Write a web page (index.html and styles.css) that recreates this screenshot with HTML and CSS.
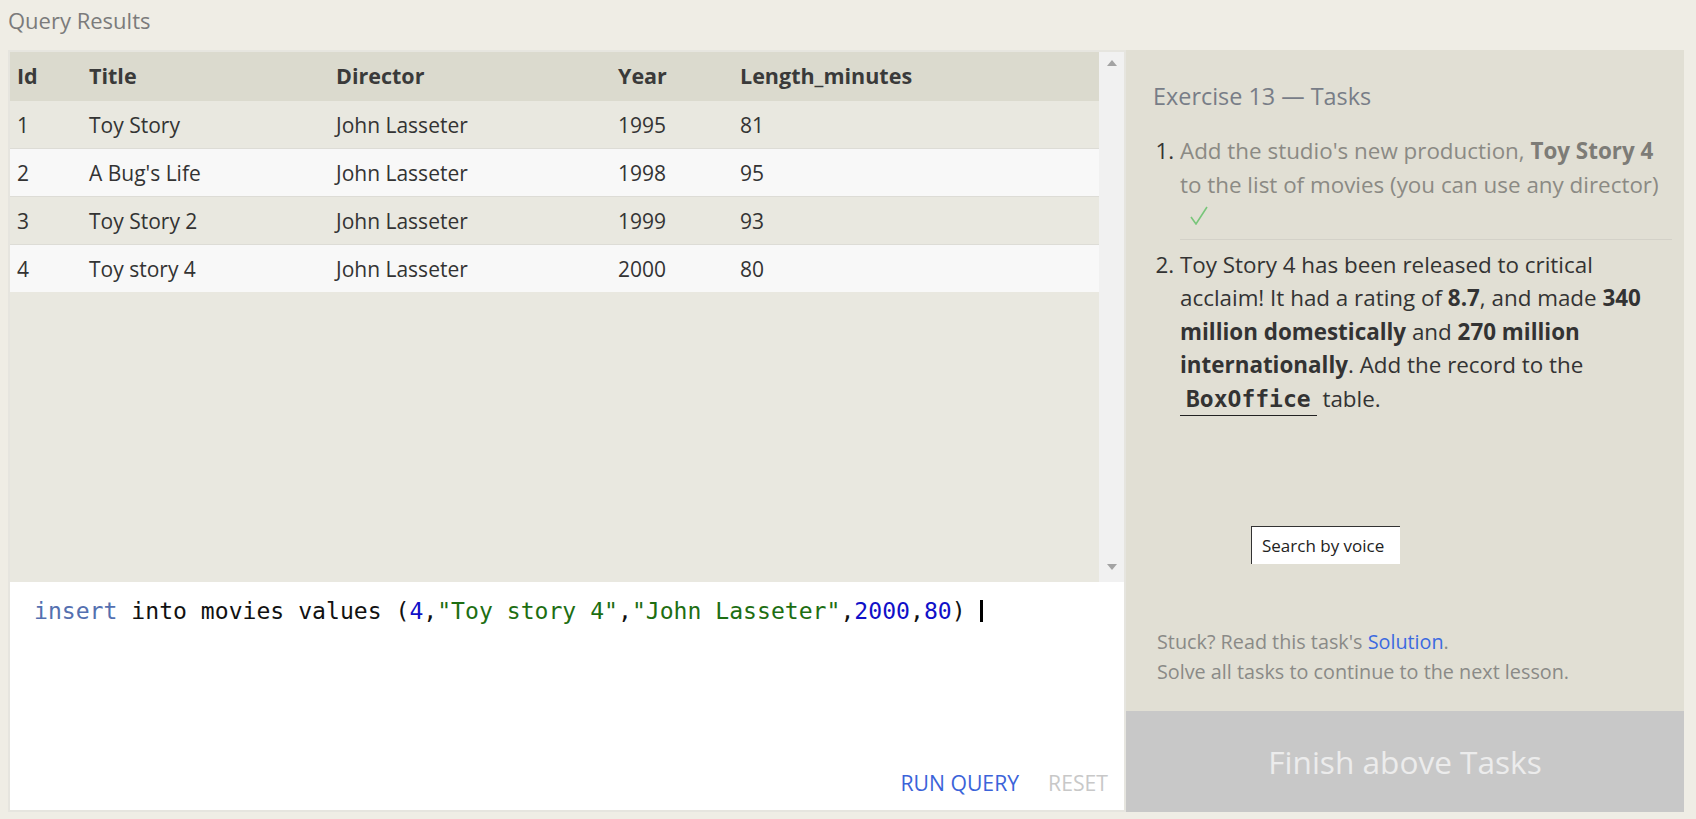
FILE: index.html
```html
<!DOCTYPE html>
<html>
<head>
<meta charset="utf-8">
<link rel="stylesheet" href="styles.css">
</head>
<body>
<div class="page-title">Query Results</div>
<div class="main">
  <div class="left">
    <div class="results">
      <div class="table-wrap">
        <table class="grid">
          <thead>
            <tr><th class="c-id">Id</th><th class="c-title">Title</th><th class="c-dir">Director</th><th class="c-year">Year</th><th>Length_minutes</th></tr>
          </thead>
          <tbody>
            <tr><td>1</td><td>Toy Story</td><td>John Lasseter</td><td>1995</td><td>81</td></tr>
            <tr><td>2</td><td>A Bug's Life</td><td>John Lasseter</td><td>1998</td><td>95</td></tr>
            <tr><td>3</td><td>Toy Story 2</td><td>John Lasseter</td><td>1999</td><td>93</td></tr>
            <tr><td>4</td><td>Toy story 4</td><td>John Lasseter</td><td>2000</td><td>80</td></tr>
          </tbody>
        </table>
      </div>
      <div class="scrollbar">
        <span class="arrow up"></span>
        <span class="arrow down"></span>
      </div>
    </div>
    <div class="editor">
      <div class="code"><span class="kw">insert</span> into movies values (<span class="num">4</span>,<span class="str">"Toy story 4"</span>,<span class="str">"John Lasseter"</span>,<span class="num">2000</span>,<span class="num">80</span>) <span class="cursor"></span></div>
      <div class="actions">
        <span class="run">RUN QUERY</span>
        <span class="reset">RESET</span>
      </div>
    </div>
  </div>
  <div class="right">
    <div class="tasks">
      <h3 class="ex-title">Exercise 13 — Tasks</h3>
      <ol class="task-list">
        <li class="done">Add the studio's new production, <b>Toy Story 4</b> to the list of movies (you can use any director) <svg class="check" width="18" height="19" viewBox="0 0 18 19"><polyline points="1,11 6,18 17,1" fill="none" stroke="#78c67a" stroke-width="1.6"/></svg></li>
        <li>Toy Story 4 has been released to critical acclaim! It had a rating of <b>8.7</b>, and made <b>340 million domestically</b> and <b>270 million internationally</b>. Add the record to the <code>BoxOffice</code> table.</li>
      </ol>
    </div>
    <div class="voice-tip">Search by voice</div>
    <div class="stuck">
      <div>Stuck? Read this task's <a class="sol">Solution</a>.</div>
      <div>Solve all tasks to continue to the next lesson.</div>
    </div>
    <div class="finish">Finish above Tasks</div>
  </div>
</div>
</body>
</html>
```

FILE: styles.css
```css
html, body {
  margin: 0;
  padding: 0;
}
body {
  background: #efede5;
  font-family: "Open Sans", "Noto Sans", sans-serif;
  color: #333;
  width: 1696px;
  height: 819px;
  overflow: hidden;
}
.page-title {
  height: 50px;
  box-sizing: border-box;
  padding: 5px 0 0 8px;
  font-size: 22px;
  line-height: 30px;
  color: #7b7b7b;
}
.main {
  display: flex;
  height: 762px;
  margin: 0 12px 0 8px;
}
.left {
  width: 1118px;
  border: 2px solid #e6e5df;
  box-sizing: border-box;
  display: flex;
  flex-direction: column;
}
.results {
  height: 530px;
  display: flex;
  background: #e9e8e0;
}
.table-wrap {
  flex: 1;
}
.grid {
  width: 100%;
  border-collapse: collapse;
  font-size: 21px;
  color: #333;
}
.grid th {
  background: #dbdace;
  text-align: left;
  font-weight: 700;
  font-size: 21.5px;
  height: 47px;
  padding: 0 0 2px 7px;
  color: #3a3a3a;
}
.grid td {
  height: 47px;
  padding: 0 0 0 7px;
  border-bottom: 1px solid #dddcd6;
}
.grid tbody tr:nth-child(odd) td { background: #e9e8e0; }
.grid tbody tr:nth-child(even) td { background: #f8f8f8; }
.grid tbody tr:last-child td { border-bottom: none; }
.c-id { width: 65px; }
.c-title { width: 240px; }
.c-dir { width: 275px; }
.c-year { width: 115px; }
.scrollbar {
  width: 25px;
  background: #f1f1f1;
  display: flex;
  flex-direction: column;
  justify-content: space-between;
  align-items: center;
  padding: 8px 0 12px;
  box-sizing: border-box;
}
.arrow {
  width: 0;
  height: 0;
  border-left: 5px solid transparent;
  border-right: 5px solid transparent;
}
.arrow.up { border-bottom: 6px solid #a3a3a3; }
.arrow.down { border-top: 6px solid #a3a3a3; }
.editor {
  flex: 1;
  background: #fff;
  display: flex;
  flex-direction: column;
  justify-content: space-between;
}
.code {
  font-family: "DejaVu Sans Mono", "Liberation Mono", monospace;
  font-size: 23.1px;
  line-height: 30px;
  padding: 14px 0 0 24px;
  color: #111;
  white-space: pre;
  display: flex;
  align-items: center;
}
.kw { color: #5470b0; }
.num { color: #1010c8; }
.str { color: #1d6e12; }
.cursor {
  display: inline-block;
  width: 3px;
  height: 22px;
  background: #000;
}
.actions {
  display: flex;
  justify-content: flex-end;
  gap: 29px;
  padding: 0 16px 13px 0;
  font-size: 21.2px;
  line-height: 28px;
}
.run { color: #3b63d9; }
.reset { color: #c8c8c8; }
.right {
  flex: 1;
  background: #e1dfd4;
  display: flex;
  flex-direction: column;
  position: relative;
}
.tasks {
  padding: 30px 12px 0 0;
}
.ex-title {
  margin: 0 0 22px 27px;
  font-weight: 400;
  font-size: 23.4px;
  line-height: 32px;
  color: #787d87;
}
.task-list {
  margin: 0;
  padding: 0 0 0 54px;
  font-size: 22.4px;
  line-height: 33.5px;
  color: #333;
}
.task-list li {
  padding: 0 0 6px 0;
}
.task-list li.done {
  color: #8b8a84;
  border-bottom: 1px solid #d3d1c8;
  padding-bottom: 4px;
  margin-bottom: 8px;
}
.task-list li.done::marker { color: #333; }
.task-list li.done b { color: #7d7c77; }
.check {
  margin-left: 10px;
  vertical-align: 1px;
}
.task-list code {
  font-family: "DejaVu Sans Mono", "Liberation Mono", monospace;
  font-weight: 700;
  font-size: 23px;
  padding: 0 6px 3px;
  border-bottom: 1px solid #222;
  color: #333;
}
.voice-tip {
  position: absolute;
  left: 125px;
  top: 476px;
  width: 138px;
  height: 37px;
  background: #fff;
  border-top: 1px solid #333;
  border-left: 1px solid #333;
  font-size: 17px;
  line-height: 37px;
  padding-left: 10px;
  color: #222;
}
.stuck {
  margin-top: auto;
  padding: 0 0 24px 31px;
  font-size: 19.8px;
  line-height: 30px;
  color: #8a8a87;
}
.sol { color: #3c6ae0; }
.finish {
  height: 101px;
  background: #c8c8c8;
  color: #ececec;
  font-size: 31.6px;
  display: flex;
  align-items: center;
  justify-content: center;
}
```
